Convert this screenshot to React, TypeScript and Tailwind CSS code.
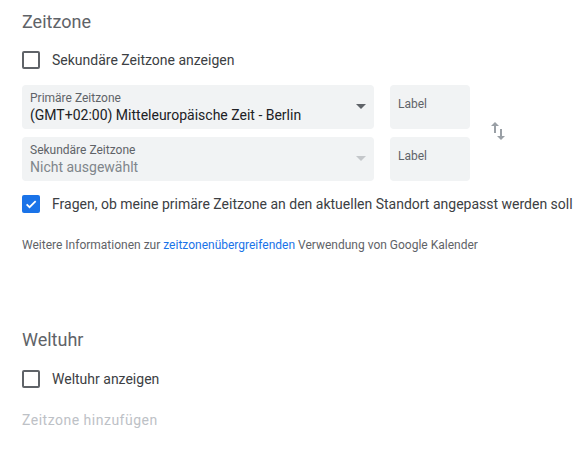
import React from 'react';

const font = { fontFamily: 'Roboto, "Noto Sans", Arial, sans-serif' };

const Checkbox: React.FC<{ checked?: boolean }> = ({ checked }) =>
  checked ? (
    <div className="w-[18px] h-[18px] rounded-[2px] bg-[#1a73e8] flex items-center justify-center shrink-0">
      <svg width="14" height="14" viewBox="0 0 24 24">
        <path d="M4.5 12.5l5 5L20 7" fill="none" stroke="white" strokeWidth="3" />
      </svg>
    </div>
  ) : (
    <div className="w-[18px] h-[18px] rounded-[2px] border-2 border-[#5f6368] shrink-0" />
  );

const Select: React.FC<{ label: string; value: string; disabled?: boolean }> = ({ label, value, disabled }) => (
  <div className="w-[352px] h-[44px] bg-[#f1f3f4] rounded-[4px] flex items-center pl-2 pr-[7px]">
    <div className="flex-1 flex flex-col self-start pt-[6px]">
      <span className="text-[12px] leading-[14px] text-[#5f6368]">{label}</span>
      <span className={`text-[14px] leading-[20px] ${disabled ? 'text-[#80868b]' : 'text-[#202124]'}`}>{value}</span>
    </div>
    <div
      className={`w-0 h-0 border-l-[5px] border-r-[5px] border-t-[5px] border-l-transparent border-r-transparent ${
        disabled ? 'border-t-[#c4c7ca]' : 'border-t-[#5f6368]'
      } -mt-[2px] mr-[1px]`}
    />
  </div>
);

const LabelBox: React.FC = () => (
  <div className="w-[80px] h-[44px] bg-[#f1f3f4] rounded-[4px] px-2 pt-[6px]">
    <span className="text-[12px] leading-[14px] text-[#5f6368]">Label</span>
  </div>
);

export default function App() {
  return (
    <div className="w-[587px] h-[453px] bg-white pl-[22px] pt-[10px] flex flex-col overflow-hidden" style={font}>
      <h2 className="text-[18px] leading-6 text-[#5f6368]">Zeitzone</h2>

      <div className="flex items-center gap-3 mt-[17px] h-[18px]">
        <Checkbox />
        <span className="text-[14px] text-[#3c4043]">Sekundäre Zeitzone anzeigen</span>
      </div>

      <div className="flex items-center mt-[16px]">
        <div className="flex flex-col gap-2">
          <div className="flex gap-4">
            <Select label="Primäre Zeitzone" value="(GMT+02:00) Mitteleuropäische Zeit - Berlin" />
            <LabelBox />
          </div>
          <div className="flex gap-4">
            <Select label="Sekundäre Zeitzone" value="Nicht ausgewählt" disabled />
            <LabelBox />
          </div>
        </div>
        <svg viewBox="0 0 24 24" className="w-6 h-6 shrink-0 ml-4 -mt-[4px]">
          <path
            d="M16 17.01V10h-2v7.01h-3L15 21l4-3.99h-3zM9 3L5 6.99h3V14h2V6.99h3L9 3z"
            fill="#9aa0a6"
          />
        </svg>
      </div>

      <div className="flex items-center gap-3 mt-[14px] h-[18px]">
        <Checkbox checked />
        <span className="text-[14px] text-[#3c4043] whitespace-nowrap">
          Fragen, ob meine primäre Zeitzone an den aktuellen Standort angepasst werden soll
        </span>
      </div>

      <p className="text-[12px] leading-4 text-[#5f6368] mt-[24px]">
        Weitere Informationen zur <span className="text-[#1a73e8]">zeitzonenübergreifenden</span> Verwendung von
        Google Kalender
      </p>

      <h2 className="text-[18px] leading-6 text-[#5f6368] mt-[75px]">Weltuhr</h2>

      <div className="flex items-center gap-3 mt-[18px] h-[18px]">
        <Checkbox />
        <span className="text-[14px] text-[#3c4043]">Weltuhr anzeigen</span>
      </div>

      <div className="text-[14px] leading-5 tracking-[0.5px] text-[#bdc1c6] mt-[22px]">
        Zeitzone hinzufügen
      </div>
    </div>
  );
}
